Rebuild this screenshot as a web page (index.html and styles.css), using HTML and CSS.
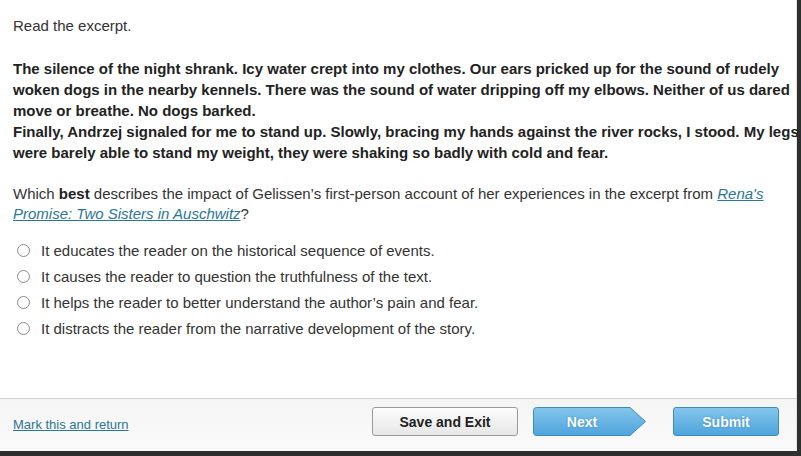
FILE: index.html
```html
<!DOCTYPE html>
<html>
<head>
<meta charset="utf-8">
<link rel="stylesheet" href="styles.css">
</head>
<body>
<div class="frame">
  <div class="content">
    <p class="intro">Read the excerpt.</p>
    <p class="excerpt">The silence of the night shrank. Icy water crept into my clothes. Our ears pricked up for the sound of rudely woken dogs in the nearby kennels. There was the sound of water dripping off my elbows. Neither of us dared move or breathe. No dogs barked.<br>Finally, Andrzej signaled for me to stand up. Slowly, bracing my hands against the river rocks, I stood. My legs were barely able to stand my weight, they were shaking so badly with cold and fear.</p>
    <p class="question">Which <b>best</b> describes the impact of Gelissen’s first-person account of her experiences in the excerpt from <a class="title-link" href="#">Rena's Promise: Two Sisters in Auschwitz</a>?</p>
    <ul class="options">
      <li><span class="radio"></span>It educates the reader on the historical sequence of events.</li>
      <li><span class="radio"></span>It causes the reader to question the truthfulness of the text.</li>
      <li><span class="radio"></span>It helps the reader to better understand the author’s pain and fear.</li>
      <li><span class="radio"></span>It distracts the reader from the narrative development of the story.</li>
    </ul>
  </div>
  <div class="footer">
    <a class="mark" href="#">Mark this and return</a>
    <div class="actions">
      <button class="btn btn-grey">Save and Exit</button>
      <button class="btn btn-next">
        <svg class="next-bg" width="115" height="29" viewBox="0 0 115 29"><defs><linearGradient id="g" x1="0" y1="0" x2="0" y2="1"><stop offset="0" stop-color="#84c6ec"/><stop offset="1" stop-color="#4ea4dc"/></linearGradient></defs><path d="M1.5 3.5 Q1.5 0.5 4.5 0.5 H98 L113.5 14.5 L98 28.5 H4.5 Q1.5 28.5 1.5 25.5 Z" fill="url(#g)" stroke="#3a8cc4" stroke-width="1"/></svg>
        <span class="next-label">Next</span>
      </button>
      <button class="btn btn-blue">Submit</button>
    </div>
  </div>
  <div class="bottom-bar"></div>
</div>
</body>
</html>
```
FILE: styles.css
```css
html, body {
  margin: 0;
  padding: 0;
  background: #fff;
}
.frame {
  width: 797px;
  height: 456px;
  border-right: 4px solid #2f2f2f;
  display: flex;
  flex-direction: column;
  font-family: "Liberation Sans", Arial, sans-serif;
  color: #333;
  box-sizing: content-box;
}
.content {
  flex: 1;
  padding: 16px 0 0 13px;
  box-shadow: inset -1px 0 0 #e2e2e2;
}
p { margin: 0; }
.intro {
  font-size: 15px;
  line-height: 20px;
  color: #333;
}
.excerpt {
  margin-top: 22px;
  margin-right: -6px;
  font-size: 15px;
  font-weight: bold;
  line-height: 21px;
  color: #222;
}
.question {
  margin-top: 21px;
  font-size: 15px;
  line-height: 20px;
  color: #333;
}
.question b { color: #222; }
.title-link {
  color: #2b7693;
  font-style: italic;
  text-decoration: underline;
}
.options {
  list-style: none;
  margin: 13px 0 0 0;
  padding: 0;
}
.options li {
  display: flex;
  align-items: center;
  height: 26px;
  font-size: 15px;
  color: #333;
}
.radio {
  width: 11px;
  height: 11px;
  border: 1px solid #8a8a8a;
  border-radius: 50%;
  margin: 0 11px 0 4px;
  background: #fff;
}
.footer {
  height: 52px;
  border-top: 1px solid #d0d0d0;
  background: linear-gradient(#f5f5f5, #fafafa);
  display: flex;
  align-items: flex-start;
  justify-content: space-between;
  padding: 0 18px 0 13px;
  box-shadow: inset -1px 0 0 #e2e2e2;
}
.mark {
  font-size: 13px;
  color: #2b7693;
  text-decoration: underline;
  margin-top: 18px;
}
.actions {
  display: flex;
  align-items: center;
  margin-top: 8px;
}
.btn {
  font-family: "Liberation Sans", Arial, sans-serif;
  font-size: 14px;
  font-weight: bold;
  height: 29px;
  padding: 0;
  cursor: pointer;
}
.btn-grey {
  width: 146px;
  border: 1px solid #9a9a9a;
  border-radius: 3px;
  background: linear-gradient(#fdfdfd, #e6e6e6);
  color: #222;
}
.btn-next {
  position: relative;
  width: 115px;
  margin-left: 14px;
  border: none;
  background: transparent;
  color: #fff;
}
.next-bg {
  position: absolute;
  left: 0;
  top: 0;
}
.next-label {
  position: relative;
  margin-right: 15px;
  text-shadow: 0 0 2px #3d86b8;
}
.btn-blue {
  width: 106px;
  margin-left: 26px;
  border: 1px solid #3a8cc4;
  border-radius: 3px;
  background: linear-gradient(#84c6ec, #4ea4dc);
  color: #fff;
  text-shadow: 0 0 2px #3d86b8;
}
.bottom-bar {
  height: 5px;
  background: #2f2f2f;
}
```
